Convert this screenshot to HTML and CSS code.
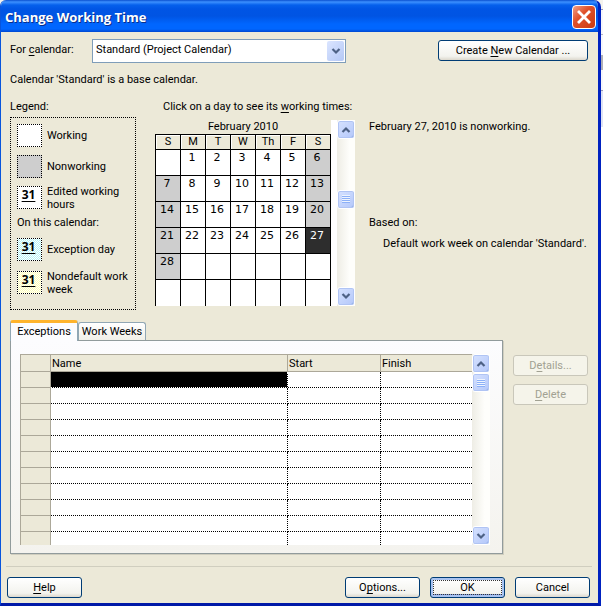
FILE: index.html
```html
<!DOCTYPE html>
<html lang="en">
<head>
<meta charset="utf-8">
<title>Change Working Time</title>
<link rel="stylesheet" href="styles.css">
</head>
<body>
<svg class="defs" aria-hidden="true">
  <symbol id="up" viewBox="0 0 10 10"><path d="M1.5 7 5 3.5 8.500 7" fill="none" stroke="#4d6185" stroke-width="2.2"/></symbol>
  <symbol id="down" viewBox="0 0 10 10"><path d="M1.500 3 5 6.500 8.500 3" fill="none" stroke="#4d6185" stroke-width="2.2"/></symbol>
</svg>
<div class="window">
  <header class="titlebar">
    <h1>Change Working Time</h1>
    <button class="close" aria-label="Close"><svg viewBox="0 0 22 22"><path d="M6 6 16 16M16 6 6 16" stroke="#fff" stroke-width="2.8" stroke-linecap="square"/></svg></button>
  </header>
  <main>
    <div class="pick">
      <label for="cal">For <u>c</u>alendar:</label>
      <div class="combo">
        <select id="cal"><option>Standard (Project Calendar)</option></select>
        <span class="arrow"><svg><use href="#down"/></svg></span>
      </div>
      <button class="btn create">Create <u>N</u>ew Calendar ...</button>
    </div>
    <p class="status">Calendar 'Standard' is a base calendar.</p>
    <div class="middle">
      <section>
        <h2>Legend:</h2>
        <div class="legend">
          <div class="key"><span class="swatch"></span>Working</div>
          <div class="key"><span class="swatch off"></span>Nonworking</div>
          <div class="key"><span class="swatch">31</span>Edited working hours</div>
          <p>On this calendar:</p>
          <div class="key"><span class="swatch exception">31</span>Exception day</div>
          <div class="key last"><span class="swatch week">31</span>Nondefault work week</div>
        </div>
      </section>
      <section>
        <h2 class="hint">Click on a day to see its <u>w</u>orking times:</h2>
        <div class="calendar">
          <table class="month">
            <caption>February 2010</caption>
            <thead><tr><th>S</th><th>M</th><th>T</th><th>W</th><th>Th</th><th>F</th><th>S</th></tr></thead>
            <tbody>
              <tr><td></td><td>1</td><td>2</td><td>3</td><td>4</td><td>5</td><td class="off">6</td></tr>
              <tr><td class="off">7</td><td>8</td><td>9</td><td>10</td><td>11</td><td>12</td><td class="off">13</td></tr>
              <tr><td class="off">14</td><td>15</td><td>16</td><td>17</td><td>18</td><td>19</td><td class="off">20</td></tr>
              <tr><td class="off">21</td><td>22</td><td>23</td><td>24</td><td>25</td><td>26</td><td class="selected">27</td></tr>
              <tr><td class="off">28</td><td></td><td></td><td></td><td></td><td></td><td></td></tr>
              <tr><td></td><td></td><td></td><td></td><td></td><td></td><td></td></tr>
            </tbody>
          </table>
          <div class="scroll">
            <button aria-label="Previous month"><svg><use href="#up"/></svg></button>
            <span class="space"></span>
            <span class="thumb"><i></i></span>
            <span class="space more"></span>
            <button aria-label="Next month"><svg><use href="#down"/></svg></button>
          </div>
        </div>
      </section>
      <section class="info">
        <p>February 27, 2010 is nonworking.</p>
        <p class="based">Based on:</p>
        <p class="reason">Default work week on calendar 'Standard'.</p>
      </section>
    </div>
    <div class="lower">
      <div class="tabs">
        <div class="tablist" role="tablist">
          <button class="tab active" role="tab" aria-selected="true">Exceptions</button>
          <button class="tab" role="tab" aria-selected="false">Work Weeks</button>
        </div>
        <div class="panel" role="tabpanel">
          <table class="grid">
            <colgroup><col class="c-row"><col><col class="c-start"><col class="c-finish"></colgroup>
            <thead><tr><th></th><th>Name</th><th>Start</th><th>Finish</th></tr></thead>
            <tbody>
              <tr><th></th><td class="current"></td><td></td><td></td></tr>
              <tr><th></th><td></td><td></td><td></td></tr>
              <tr><th></th><td></td><td></td><td></td></tr>
              <tr><th></th><td></td><td></td><td></td></tr>
              <tr><th></th><td></td><td></td><td></td></tr>
              <tr><th></th><td></td><td></td><td></td></tr>
              <tr><th></th><td></td><td></td><td></td></tr>
              <tr><th></th><td></td><td></td><td></td></tr>
              <tr><th></th><td></td><td></td><td></td></tr>
              <tr><th></th><td></td><td></td><td></td></tr>
              <tr class="end"><th></th><td></td><td></td><td></td></tr>
            </tbody>
          </table>
          <div class="scroll">
            <button aria-label="Scroll up"><svg><use href="#up"/></svg></button>
            <span class="thumb"><i></i></span>
            <span class="space"></span>
            <button aria-label="Scroll down"><svg><use href="#down"/></svg></button>
          </div>
        </div>
      </div>
      <div class="side">
        <button class="btn" disabled>D<u>e</u>tails...</button>
        <button class="btn" disabled><u>D</u>elete</button>
      </div>
    </div>
  </main>
  <footer>
    <button class="btn help"><u>H</u>elp</button>
    <button class="btn">O<u>p</u>tions...</button>
    <button class="btn default">OK</button>
    <button class="btn">Cancel</button>
  </footer>
</div>
</body>
</html>
```
FILE: styles.css
```css
* { box-sizing: border-box; }
body {
  margin: 0;
  padding-right: 2px;
  background: linear-gradient(#f4f3ee 9px, #8a8fc0 9px 10px, #f6f6fb 10px 34px, #b4b4c4 34px 35px, #f6f6fb 35px 55px, #b0b0b8 55px 70px, #f6f6fb 70px 90px, #9a9ab8 90px 91px, #dfe3f4 91px 127px, #fff 127px);
  font: 11px/13px Roboto, "Liberation Sans", sans-serif;
  color: #000;
}
button, select { font: inherit; color: inherit; }
button { padding: 0; }
h1, h2, p { margin: 0; font-weight: normal; font-size: inherit; }
u { text-underline-offset: 2px; }
.defs { display: none; }

.window {
  display: flex;
  flex-direction: column;
  min-height: 100vh;
  background: #ece9d8;
  border: solid #0831d9;
  border-width: 0 3px 3px 1px;
  border-color: #0019a8 #0022c0 #0019a8 #0855dd;
  border-radius: 6px 7px 0 0;
  overflow: hidden;
}
.titlebar {
  display: flex;
  align-items: center;
  justify-content: space-between;
  height: 32px;
  padding: 2px 2px 0 4px;
  background: linear-gradient(#0a50d0, #3c90ff 2px, #0560ec 5px, #0055e5 9px, #0054e3 16px, #0066ff 24px, #0066ff 29px, #0048d0);
}
.titlebar h1 {
  font: bold 13px/20px "Open Sans", sans-serif;
  color: #fff;
  text-shadow: 1px 1px #0a2f8a;
}
.close {
  width: 24px;
  height: 24px;
  border: 1px solid #fff;
  border-radius: 4px;
  background: linear-gradient(135deg, #f0a088, #e0512b 40%, #cc3a10);
}
.close svg { display: block; width: 22px; height: 22px; }

main { flex: 1; padding: 7px 10px 0 9px; }

.pick { display: flex; align-items: flex-start; }
.pick label { width: 82px; padding-top: 4px; }
.combo { position: relative; width: 254px; }
.combo select {
  display: block;
  width: 100%;
  height: 24px;
  padding: 0 20px 3px 3px;
  appearance: none;
  border: 1px solid #7f9db9;
  border-radius: 0;
  background: #fff;
}
.arrow {
  position: absolute;
  top: 2px;
  right: 2px;
  display: grid;
  place-items: center;
  width: 17px;
  height: 20px;
  background: linear-gradient(135deg, #dbe5ff, #b4c8f6);
  border-radius: 2px;
  pointer-events: none;
}
.arrow svg, .scroll svg { display: block; width: 10px; height: 10px; }

.btn {
  width: 75px;
  height: 21px;
  border: 1px solid #003c74;
  border-radius: 3px;
  background: linear-gradient(#fff, #f3f3ee 80%, #dcd8cd);
}
.btn.create { width: 150px; margin: 1px 0 0 auto; }
.btn.default { box-shadow: inset 0 0 0 2px #a9c3f0, inset 0 -3px #7f9de0; outline: 1px dotted #333; outline-offset: -4px; }
.btn:disabled { border-color: #c9c7ba; background: #f5f4ea; color: #a1a192; }

.status { margin-top: 10px; line-height: 14px; }

.middle { display: flex; align-items: flex-start; margin-top: 13px; }
h2, .info p { line-height: 14px; white-space: nowrap; }
.legend {
  width: 126px;
  height: 193px;
  margin: 3px 19px 0 0;
  padding: 5px 4px 0 6px;
  border: 1px dotted #000;
}
.key { display: flex; align-items: center; gap: 5px; height: 25px; margin-bottom: 6px; }
.legend p { height: 14px; margin: 1px 0 7px; line-height: 14px; }
.key.last { margin-top: 8px; }
.swatch {
  flex: none;
  width: 25px;
  height: 23px;
  padding-right: 2px;
  border: 1px dotted #000;
  background: #fff;
  font: bold 12px/16px "Open Sans", sans-serif;
  text-align: center;
  text-decoration: underline;
  text-underline-offset: 2px;
}
.off { background: #cecece; }
.exception { background: repeating-conic-gradient(#fff 0 25%, #b4f4f6 0 50%) 0 0 / 2px 2px; }
.week { background: repeating-conic-gradient(#fff 0 25%, #ffffb4 0 50%) 0 0 / 2px 2px; }

.hint { padding-left: 8px; }
.calendar { display: flex; align-items: stretch; margin-top: 6px; }
.month { width: 176px; border-collapse: collapse; table-layout: fixed; }
.month caption { line-height: 14px; }
.month th, .month td { padding: 0; border: 1px solid #000; text-align: center; }
.month th { height: 15px; line-height: 14px; font-weight: normal; box-shadow: inset 1px 1px #fff; }
.month td { height: 26px; padding-right: 2px; background: #fff; font-family: "DejaVu Sans", sans-serif; line-height: 16px; vertical-align: top; }
.month tr:last-child td { border-bottom: 0; }
.month td.off { background: #cecece; }
.month td.selected { background: #2d2d2d; color: #fff; }

.scroll {
  display: flex;
  flex-direction: column;
  width: 18px;
  background: linear-gradient(90deg, #eeede5, #fefefb 70%);
}
.calendar .scroll { width: 24px; border-left: 6px solid #fff; }
.scroll button, .thumb {
  display: grid;
  place-items: center;
  width: 18px;
  height: 19px;
  border: 1px solid #fff;
  border-radius: 3px;
  background: linear-gradient(135deg, #d6e2ff, #b3c7fa);
  box-shadow: inset 0 0 0 1px #b0c4f4, inset -1px -1px #86a4de;
}
.space { flex: 46; }
.space.more { flex: 70; }
.thumb i { width: 8px; height: 8px; background: repeating-linear-gradient(#eef4fe 0 1px, #8cb0f8 1px 2px); }

.info { padding-left: 14px; margin-top: 20px; }
.info .based { margin-top: 82px; }
.info .reason { margin-top: 7px; padding-left: 14px; }

.lower { display: flex; margin-top: 10px; }
.tabs { flex: 1; }
.tablist { display: flex; align-items: flex-end; height: 20px; }
.tab {
  width: 68px;
  height: 18px;
  border: 1px solid #91a7b4;
  border-bottom: 0;
  border-radius: 3px 3px 0 0;
  background: linear-gradient(#fff, #f1f0e8);
  white-space: nowrap;
}
.tab.active {
  z-index: 1;
  height: 21px;
  margin-bottom: -1px;
  padding-bottom: 2px;
  border-top: 3px solid #ffb42c;
  background: #fcfcfe;
}
.panel {
  display: flex;
  padding: 13px 12px 8px 9px;
  border: 1px solid #919b9c;
  background: linear-gradient(#fcfcfe, #f4f3ee);
  box-shadow: 1px 1px #d0cebf;
}
.grid { flex: 1; border-collapse: separate; border-spacing: 0; table-layout: fixed; background: #fff; border-left: 1px solid #aca899; }
.c-row { width: 30px; }
.c-start { width: 93px; }
.c-finish { width: 91px; }
.grid th, .grid td { height: 16px; padding: 0; }
.grid th { background: #ece9d8; border: solid #aca899; border-width: 0 1px 1px 0; font-weight: normal; text-align: left; }
.grid thead th { height: 18px; padding-left: 1px; border-top-width: 1px; }
.grid thead th:last-child { border-right: 0; }
.grid td { border: dotted #000; border-width: 0 1px 1px 0; }
.grid td:last-child { border-right: 0; }
.grid td.current { background: #000; border-color: #fff; }
.grid .end th, .grid .end td { height: 13px; border-bottom: 0; }

.side { display: flex; flex-direction: column; gap: 8px; padding-left: 10px; margin-top: 35px; }

footer {
  display: flex;
  gap: 10px;
  margin: 12px 6px 0 5px;
  padding: 10px 2px 5px 1px;
  border-top: 1px solid #d0cebf;
}
.help { margin-right: auto; }
```
